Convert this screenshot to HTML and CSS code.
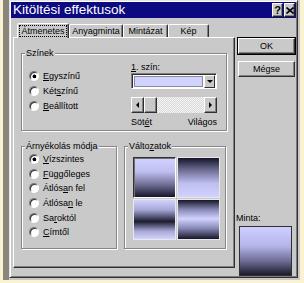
FILE: index.html
```html
<!DOCTYPE html>
<html>
<head>
    <title>Kitöltési effektusok</title>
    <link rel="stylesheet" href="styles.css">
</head>
<body>
    <div class="screen">
        <div class="edge"></div>
        <div class="dialog">
            <div class="dialog-inner">
                <div class="titlebar">
                    <span class="title">Kitöltési effektusok</span>
                    <div class="title-buttons">
                        <span class="tb-btn">?</span>
                        <span class="tb-btn tb-close">
                            <svg width="8" height="7" viewBox="0 0 8 7"><path d="M0.5 0.5 L7.5 6.5 M7.5 0.5 L0.5 6.5" stroke="#000" stroke-width="1.6"/></svg>
                        </span>
                    </div>
                </div>

                <div class="content">
                    <div class="left-col">
                        <div class="tabs">
                            <div class="tab active"><span class="focus">Átmenetes</span></div>
                            <div class="tab tab-2">Anyagminta</div>
                            <div class="tab tab-3">Mintázat</div>
                            <div class="tab tab-4">Kép</div>
                        </div>
                        <div class="panel">
                            <fieldset class="group colors">
                                <legend>Színek</legend>
                                <div class="colors-body">
                                    <div class="radio-list">
                                        <div class="radio-row"><span class="radio checked"></span><span><u>E</u>gyszínű</span></div>
                                        <div class="radio-row"><span class="radio"></span><span>Két<u>s</u>zínű</span></div>
                                        <div class="radio-row"><span class="radio"></span><span><u>B</u>eállított</span></div>
                                    </div>
                                    <div class="color-controls">
                                        <div class="field-label"><u>1</u>. szín:</div>
                                        <div class="combo">
                                            <div class="combo-value"></div>
                                            <div class="combo-btn"><span class="tri-down"></span></div>
                                        </div>
                                        <div class="scrollbar">
                                            <div class="sb-btn"><span class="tri-left"></span></div>
                                            <div class="sb-thumb"></div>
                                            <div class="sb-track"></div>
                                            <div class="sb-btn"><span class="tri-right"></span></div>
                                        </div>
                                        <div class="range-labels">
                                            <span>Söt<u>é</u>t</span>
                                            <span>Világos</span>
                                        </div>
                                    </div>
                                </div>
                            </fieldset>

                            <div class="lower">
                                <fieldset class="group shading">
                                    <legend>Árnyékolás módja</legend>
                                    <div class="radio-list shading-list">
                                        <div class="radio-row"><span class="radio checked"></span><span><u>V</u>ízszintes</span></div>
                                        <div class="radio-row"><span class="radio"></span><span><u>F</u>üggőleges</span></div>
                                        <div class="radio-row"><span class="radio"></span><span>Átlós<u>a</u>n fel</span></div>
                                        <div class="radio-row"><span class="radio"></span><span>Átlósa<u>n</u> le</span></div>
                                        <div class="radio-row"><span class="radio"></span><span>Sa<u>r</u>októl</span></div>
                                        <div class="radio-row"><span class="radio"></span><span><u>C</u>ímtől</span></div>
                                    </div>
                                </fieldset>
                                <fieldset class="group variants">
                                    <legend>Válto<u>z</u>atok</legend>
                                    <div class="variant-grid">
                                        <div class="variant v1 selected"></div>
                                        <div class="variant v2"></div>
                                        <div class="variant v3"></div>
                                        <div class="variant v4"></div>
                                    </div>
                                </fieldset>
                            </div>
                        </div>
                    </div>

                    <div class="right-col">
                        <button class="btn default">OK</button>
                        <button class="btn">Mégse</button>
                        <div class="sample">
                            <div class="sample-label">Minta:</div>
                            <div class="sample-box"></div>
                        </div>
                    </div>
                </div>
            </div>
        </div>
    </div>
</body>
</html>
```

FILE: styles.css
```css
/* Fill effects dialog, classic Windows look */
body {
    margin: 0;
    padding: 0;
    background-color: #fbf2d2;
    font-family: "Liberation Sans", Arial, sans-serif;
    font-size: 9px;
    color: #000;
}

.screen {
    display: flex;
    width: 304px;
    height: 283px;
    box-sizing: border-box;
    padding: 0 4px 3px 3px;
}

.edge {
    width: 6px;
    background-color: #8b867b;
}

.dialog {
    width: 291px;
    height: 280px;
    box-sizing: border-box;
    padding: 0 2px 2px 0;
    background-color: #c9c9c9;
}

.dialog-inner {
    height: 100%;
    box-sizing: border-box;
    border: 1px solid;
    border-color: #e4e4e4 #303030 #303030 #e4e4e4;
    box-shadow: inset 1px 1px 0 #fff, inset -1px -1px 0 #7c7c7c;
    padding: 1px;
    display: flex;
    flex-direction: column;
}

/* Title bar */
.titlebar {
    height: 16px;
    background-color: #0c0a80;
    display: flex;
    align-items: center;
    justify-content: space-between;
    padding: 0 1px 0 2px;
}

.title {
    color: #fff;
    font-size: 13.5px;
    line-height: 16px;
}

.title-buttons {
    display: flex;
}

.tb-btn {
    width: 9px;
    height: 12px;
    margin-left: 1px;
    background-color: #c9c9c9;
    border: 1px solid;
    border-color: #fff #202020 #202020 #fff;
    box-shadow: inset -1px -1px 0 #808080;
    font-weight: bold;
    font-size: 11px;
    line-height: 12px;
    text-align: center;
    display: flex;
    align-items: center;
    justify-content: center;
}

/* Main area */
.content {
    flex: 1;
    display: flex;
    padding: 3px 0 0 2px;
}

.left-col {
    width: 222px;
    display: flex;
    flex-direction: column;
}

.tabs {
    display: flex;
    align-items: flex-end;
    height: 16px;
    padding-left: 4px;
}

.tab {
    height: 13px;
    box-sizing: border-box;
    border: 1px solid;
    border-bottom: none;
    border-color: #fff #303030 #303030 #fff;
    border-radius: 2px 2px 0 0;
    box-shadow: inset -1px 0 0 #808080;
    line-height: 12px;
    text-align: center;
}

.tab.active {
    width: 52px;
    height: 15px;
    margin-bottom: -1px;
    padding-top: 1px;
    background-color: #c9c9c9;
    position: relative;
    z-index: 1;
}

.focus {
    outline: 1px dotted #000;
    padding: 0 1px;
}

.tab-2 {
    width: 54px;
}

.tab-3 {
    width: 45px;
}

.tab-4 {
    width: 41px;
}

.panel {
    height: 231px;
    box-sizing: border-box;
    border: 1px solid;
    border-color: #fff #303030 #303030 #fff;
    box-shadow: inset -1px -1px 0 #808080;
    padding: 10px 0 0 7px;
}

/* Group boxes */
.group {
    margin: 0;
    padding: 0;
    border: 1px solid #868686;
    box-shadow: inset 1px 1px 0 #fff, 1px 1px 0 #fff;
    box-sizing: border-box;
}

.group legend {
    padding: 0 1px;
    margin-left: 3px;
    line-height: 10px;
    background-color: #c9c9c9;
}

.colors {
    width: 206px;
    height: 83px;
}

.colors-body {
    display: flex;
    padding: 4px 9px 0 7px;
}

.radio-list {
    display: flex;
    flex-direction: column;
    margin-top: 6px;
}

.radio-row {
    display: flex;
    align-items: center;
    height: 15px;
    gap: 4px;
}

.radio {
    width: 8px;
    height: 8px;
    border: 1px solid;
    border-color: #7a7a7a #fff #fff #7a7a7a;
    border-radius: 50%;
    background-color: #fff;
    box-shadow: inset 1px 1px 0 #303030;
}

.radio.checked {
    background: radial-gradient(circle at 55% 55%, #000 0, #000 1.6px, #fff 2.2px);
}

.color-controls {
    margin-left: auto;
    width: 86px;
    display: flex;
    flex-direction: column;
}

.field-label {
    line-height: 10px;
}

.combo {
    margin-top: 1px;
    height: 16px;
    box-sizing: border-box;
    border: 1px solid;
    border-color: #808080 #fff #fff #808080;
    box-shadow: inset 1px 1px 0 #303030;
    background-color: #fff;
    display: flex;
    padding: 2px 1px 1px 2px;
    gap: 1px;
}

.combo-value {
    flex: 1;
    background-color: #d2d2ff;
    border: 1px solid #8a8a9a;
}

.combo-btn {
    width: 11px;
    box-sizing: border-box;
    margin: -1px 0 0 0;
    height: 13px;
    background-color: #c9c9c9;
    border: 1px solid;
    border-color: #fff #303030 #303030 #fff;
    display: flex;
    align-items: center;
    justify-content: center;
}

.tri-down {
    border-left: 3px solid transparent;
    border-right: 3px solid transparent;
    border-top: 3px solid #000;
}

.scrollbar {
    margin-top: 8px;
    height: 16px;
    display: flex;
}

.sb-btn,
.sb-thumb {
    width: 13px;
    box-sizing: border-box;
    background-color: #c9c9c9;
    border: 1px solid;
    border-color: #fff #303030 #303030 #fff;
    box-shadow: inset -1px -1px 0 #808080;
    display: flex;
    align-items: center;
    justify-content: center;
}

.sb-track {
    flex: 1;
    background-image: repeating-conic-gradient(#dadada 0 25%, #f4f4f4 0 50%);
    background-size: 2px 2px;
}

.tri-left {
    border-top: 3px solid transparent;
    border-bottom: 3px solid transparent;
    border-right: 3px solid #000;
}

.tri-right {
    border-top: 3px solid transparent;
    border-bottom: 3px solid transparent;
    border-left: 3px solid #000;
}

.range-labels {
    margin-top: 4px;
    display: flex;
    justify-content: space-between;
    line-height: 10px;
}

/* Lower groups */
.lower {
    display: flex;
    margin-top: 10px;
    gap: 7px;
}

.shading {
    width: 96px;
    height: 108px;
}

.shading-list {
    margin: 1px 0 0 7px;
}

.shading-list .radio-row {
    height: 14.6px;
}

.variants {
    width: 102px;
    height: 108px;
}

.variant-grid {
    display: grid;
    grid-template-columns: 43px 43px;
    grid-template-rows: 41px 41px;
    gap: 1px;
    margin: 6px 0 0 8px;
    background-color: #c9c9c9;
}

.variant {
    box-sizing: border-box;
    border: 1px solid #e8e8e8;
}

.variant.selected {
    border-color: #303030 #fff #fff #303030;
    box-shadow: inset 1px 1px 0 #707070;
}

.v1 {
    background: linear-gradient(#d2d2ff 0%, #bfbff0 35%, #6a6a90 70%, #15152a 100%);
}

.v2 {
    background: linear-gradient(#15152a 0%, #6a6a90 30%, #bfbff0 65%, #d2d2ff 100%);
}

.v3 {
    background: linear-gradient(#d2d2ff 0%, #a8a8d8 25%, #1c1c30 55%, #a8a8d8 80%, #d2d2ff 100%);
}

.v4 {
    background: linear-gradient(#15152a 0%, #8a8ab8 25%, #d2d2ff 48%, #8a8ab8 72%, #15152a 100%);
}

/* Right column */
.right-col {
    margin-left: 3px;
    width: 57px;
    display: flex;
    flex-direction: column;
}

.btn {
    height: 16px;
    padding: 0;
    font-family: inherit;
    font-size: 9px;
    color: #000;
    background-color: #c9c9c9;
    border: 1px solid;
    border-color: #fff #303030 #303030 #fff;
    box-shadow: inset -1px -1px 0 #808080;
}

.btn.default {
    margin-top: 17px;
    outline: 1px solid #000;
}

.btn + .btn {
    margin-top: 7px;
}

.sample {
    margin-top: auto;
}

.sample-label {
    line-height: 10px;
    margin: 0 0 3px -2px;
}

.sample-box {
    width: 53px;
    height: 50px;
    margin-left: 1px;
    box-sizing: border-box;
    border: 1px solid #303030;
    background: linear-gradient(#cfcfff 0%, #b4b4e8 40%, #6a6a92 72%, #1a1a2c 100%);
}
```
